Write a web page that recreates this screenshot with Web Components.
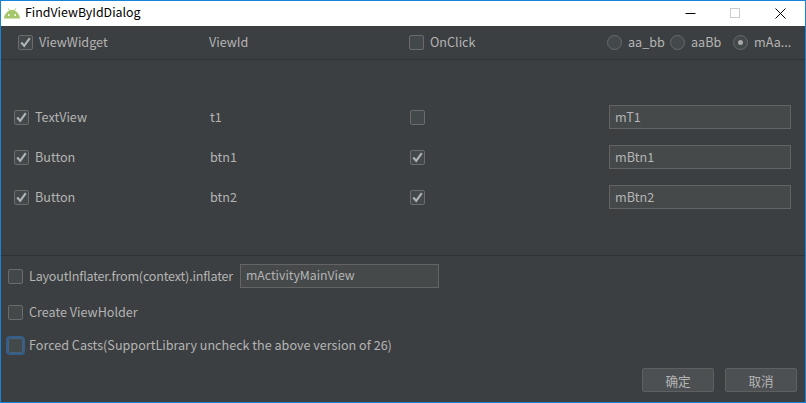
<!DOCTYPE html>
<html>
<head>
<meta charset="utf-8">
<title>FindViewByIdDialog</title>
<style>
html, body { margin: 0; padding: 0; background: #3c3f41; }
body { font-family: "Noto Sans CJK SC", "Noto Sans", sans-serif; font-size: 12.6px; color: #b4b4b4; }
</style>
</head>
<body>
<dialog-window>
  <title-bar>FindViewByIdDialog</title-bar>
  <header-row></header-row>
  <view-row class="first" checked widget="TextView" vid="t1" field="mT1"></view-row>
  <view-row checked click widget="Button" vid="btn1" field="mBtn1"></view-row>
  <view-row checked click widget="Button" vid="btn2" field="mBtn2"></view-row>
  <options-panel></options-panel>
  <button-bar></button-bar>
</dialog-window>

<script>
(function () {
  function define(name, html) {
    customElements.define(name, class extends HTMLElement {
      connectedCallback() {
        if (this.shadowRoot) return;
        this.attachShadow({ mode: "open" });
        this.shadowRoot.innerHTML = typeof html === "function" ? html(this) : html;
      }
    });
  }

  define("dialog-window", `
    <style>
    :host { display: flex; flex-direction: column; box-sizing: border-box; width: 806px; height: 403px;
      border: 1px solid #1883d7; background: #3c3f41; overflow: hidden; }
    </style>
    <slot></slot>`);

  define("title-bar", `
    <style>
    :host { display: flex; align-items: center; height: 25px; flex: none; background: #fff; color: #000; font-size: 12.4px; }
    .logo { margin: 0 5px 0 3px; flex: none; }
    .title { flex: 1; line-height: 23px; height: 25px; }
    .btn { width: 45px; height: 25px; display: flex; align-items: center; justify-content: center; }
    .btn.last { margin-right: 2px; }
    </style>
    <svg class="logo" width="16" height="11" viewBox="0 0 16 11">
      <path d="M0 10.5 C0.3 6.5 3 3.5 5.2 2.7 L3.8 0.6 L4.4 0.2 L5.9 2.3 C7.2 1.8 8.8 1.8 10.1 2.3 L11.6 0.2 L12.2 0.6 L10.8 2.7 C13 3.5 15.7 6.5 16 10.5 Z" fill="#a4c76a"/>
      <circle cx="4.8" cy="7" r="0.9" fill="#fff"/><circle cx="11.2" cy="7" r="0.9" fill="#fff"/>
    </svg>
    <span class="title"><slot></slot></span>
    <span class="btn"><svg width="11" height="11" viewBox="0 0 11 11"><path d="M0.5 5.5H10.5" stroke="#000" fill="none"/></svg></span>
    <span class="btn"><svg width="11" height="11" viewBox="0 0 11 11"><rect x="0.5" y="0.5" width="9" height="9" stroke="#ccc" fill="none"/></svg></span>
    <span class="btn last"><svg width="11" height="11" viewBox="0 0 11 11"><path d="M0.5 0.5L10.5 10.5M10.5 0.5L0.5 10.5" stroke="#000" fill="none"/></svg></span>`);

  define("check-box", (el) => `
    <style>
    :host { display: inline-block; width: 15px; height: 15px; flex: none; position: relative; }
    .box { box-sizing: border-box; width: 15px; height: 15px; border: 1px solid #6b6b6b; border-radius: 2px;
      background: #43494a; display: block; }
    :host([focused]) .box { outline: 2px solid #355f88; outline-offset: 0; border-color: #46617a; }
    svg { position: absolute; left: 2px; top: 2px; }
    </style>
    <span class="box"></span>
    ${el.hasAttribute("checked") ? `<svg width="11" height="11" viewBox="0 0 11 11"><path d="M1.2 5.6 L4.2 8.8 L9.8 1.2" stroke="#adb3b7" stroke-width="2.2" fill="none"/></svg>` : ""}`);

  define("radio-dot", (el) => `
    <style>
    :host { display: inline-block; width: 15px; height: 15px; flex: none; }
    .r { box-sizing: border-box; width: 15px; height: 15px; border: 1px solid #666a6c; border-radius: 50%;
      background: #43494a; display: flex; align-items: center; justify-content: center; }
    i { width: 5px; height: 5px; border-radius: 50%; background: #a9a9a9; }
    </style>
    <span class="r">${el.hasAttribute("checked") ? "<i></i>" : ""}</span>`);

  define("text-field", `
    <style>
    :host { display: flex; align-items: center; box-sizing: border-box; border: 1px solid #646464; background: #45494a;
      color: #b4b4b4; padding: 0 0 2px 5px; height: 24px; }
    </style>
    <slot></slot>`);

  define("header-row", `
    <style>
    :host { display: grid; grid-template-columns: 191px 200px 198px 1fr; align-items: center; flex: none;
      height: 34px; box-sizing: border-box; border-bottom: 1px solid #323232; padding-left: 17px; }
    .cell { display: flex; align-items: center; gap: 6px; }
    .lbl { padding-bottom: 2px; }
    .radios { display: flex; align-items: center; }
    .radios span { margin-left: 6px; width: 42px; white-space: nowrap; padding-bottom: 2px; }
    </style>
    <span class="cell"><check-box checked></check-box><span class="lbl">ViewWidget</span></span>
    <span class="lbl">ViewId</span>
    <span class="cell"><check-box></check-box><span class="lbl">OnClick</span></span>
    <span class="radios">
      <radio-dot></radio-dot><span>aa_bb</span>
      <radio-dot></radio-dot><span>aaBb</span>
      <radio-dot checked></radio-dot><span>mAa...</span>
    </span>`);

  define("view-row", (el) => `
    <style>
    :host { display: grid; grid-template-columns: 196px 200px 199px 182px; align-items: center; flex: none;
      height: 40px; box-sizing: border-box; padding-left: 13px; }
    :host(.first) { margin-top: 37px; }
    .cell { display: flex; align-items: center; gap: 6px; }
    .lbl { padding-bottom: 2px; }
    </style>
    <span class="cell"><check-box ${el.hasAttribute("checked") ? "checked" : ""}></check-box><span class="lbl">${el.getAttribute("widget")}</span></span>
    <span class="lbl">${el.getAttribute("vid")}</span>
    <span><check-box style="display:block" ${el.hasAttribute("click") ? "checked" : ""}></check-box></span>
    <text-field>${el.getAttribute("field")}</text-field>`);

  define("options-panel", `
    <style>
    :host { display: flex; flex-direction: column; flex: none; margin-top: 38px; border-top: 1px solid #323232; padding-left: 7px; }
    .row { display: flex; align-items: center; gap: 6px; }
    .row span { padding-bottom: 2px; }
    .tight { letter-spacing: -0.2px; }
    text-field { width: 199px; margin-left: 1px; font-size: 12.3px; }
    </style>
    <div class="row" style="margin-top:8px;height:24px"><check-box></check-box><span class="tight">LayoutInflater.from(context).inflater</span><text-field>mActivityMainView</text-field></div>
    <div class="row" style="margin-top:14px;height:20px"><check-box></check-box><span>Create ViewHolder</span></div>
    <div class="row" style="margin-top:13px;height:20px"><check-box focused></check-box><span>Forced Casts(SupportLibrary uncheck the above version of 26)</span></div>`);

  define("button-bar", `
    <style>
    :host { display: flex; justify-content: flex-end; gap: 11px; flex: none; margin-top: 13px; padding-right: 8px; }
    button { box-sizing: border-box; width: 72px; height: 24px; border: 1px solid #5e6060; border-radius: 2px;
      background: #4c5052; color: #b4b4b4; font: inherit; padding: 0; }
    </style>
    <button>确定</button><button>取消</button>`);
})();
</script>
</body>
</html>
